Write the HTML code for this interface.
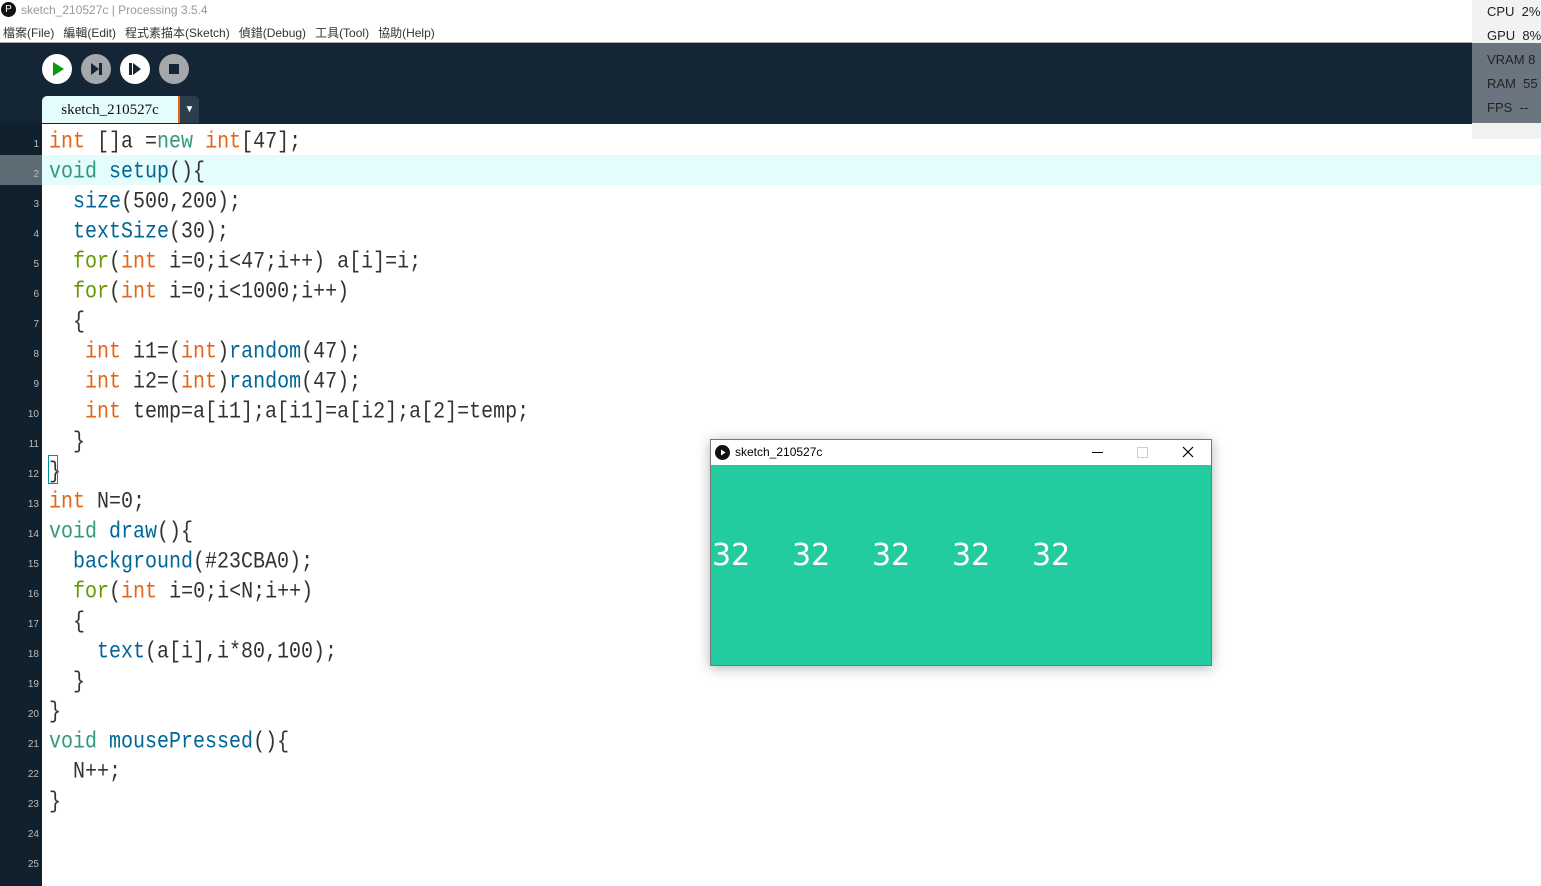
<!DOCTYPE html>
<html><head><meta charset="utf-8"><style>
body{margin:0;width:1541px;height:886px;overflow:hidden;background:#fff;position:relative;font-family:"Liberation Sans","Noto Sans CJK TC",sans-serif}
.abs{position:absolute}
#title{left:0;top:0;width:1541px;height:22px;font-size:12px;color:#999}
#menu{left:0;top:22px;height:19px;font-size:12px;color:#333;white-space:nowrap}
#menu span span{margin-right:9px}
#top{left:0;top:42px;width:1472px;height:81px;background:#142536;border-top:1px solid #aaa}
.btn{position:absolute;top:54px;width:30px;height:30px;border-radius:50%}
#gutter{left:0;top:123px;width:42px;height:763px;background:#11202d}
.ln{position:absolute;left:0;width:39px;text-align:right;font-size:10px;color:#bbb;font-family:"Liberation Sans",sans-serif}
.code{position:absolute;left:49px;font-family:"Liberation Mono",monospace;font-size:20px;color:#333;white-space:pre;height:30px;line-height:30px;transform:scaleY(1.15);transform-origin:left center}
.k{color:#E2661A}.g{color:#33997E}.b{color:#006699}.f{color:#669900}
</style></head><body>
<div class="abs" id="title"><span style="position:absolute;left:1px;top:2px;width:15px;height:15px;border-radius:50%;background:#111;color:#fff;font-size:10px;text-align:center;line-height:15px">P</span><span style="position:absolute;left:21px;top:3px">sketch_210527c | Processing 3.5.4</span></div>
<div class="abs" id="menu"><span style="position:absolute;left:3px;top:2px"><span>檔案(File)</span><span>編輯(Edit)</span><span>程式素描本(Sketch)</span><span>偵錯(Debug)</span><span>工具(Tool)</span><span>協助(Help)</span></span></div>
<div class="abs" id="top"></div>
<div class="btn" style="left:42px;background:#fff"><svg width="30" height="30"><path d="M11 8 L22 15 L11 22Z" fill="#0a9a0a"/></svg></div>
<div class="btn" style="left:81px;background:#a5a8ab"><svg width="30" height="30"><path d="M10 9 L18 15 L10 21Z" fill="#142536"/><rect x="18" y="9" width="3" height="12" fill="#142536"/></svg></div>
<div class="btn" style="left:120px;background:#fff"><svg width="30" height="30"><rect x="9" y="9" width="3" height="12" fill="#142536"/><path d="M13 9 L21 15 L13 21Z" fill="#142536"/></svg></div>
<div class="btn" style="left:159px;background:#a5a8ab"><svg width="30" height="30"><rect x="10" y="10" width="10" height="10" fill="#142536"/></svg></div>
<div class="abs" style="left:42px;top:96px;width:136px;height:27px;background:#e5fcfc;border-radius:5px 0 0 0;font-family:'Liberation Serif',serif;font-size:15px;color:#111;line-height:28px;text-align:center">sketch_210527c</div>
<div class="abs" style="left:178px;top:96px;width:2px;height:27px;background:#e2661a"></div>
<div class="abs" style="left:180px;top:96px;width:19px;height:27px;background:#2c3d4d;border-radius:0 5px 0 0;color:#fff;font-size:10px;text-align:center;line-height:27px">▼</div>
<div class="abs" style="left:1472px;top:0;width:69px;height:139px;background:#f2f2f2"></div>
<div class="abs" style="left:1472px;top:43px;width:69px;height:80px;background:#6b7580"></div>
<div class="abs" style="left:1487px;top:0px;font-size:13px;color:#222;line-height:24px;white-space:pre">CPU  2%
GPU  8%
VRAM 8
RAM  55
FPS  --</div>
<div class="abs" id="gutter"></div>
<div class="abs" style="left:0;top:155px;width:42px;height:30px;background:#5d6b75"></div>
<div class="abs" style="left:42px;top:155px;width:1499px;height:30px;background:#e5fcfc"></div>
<div id="lines"></div>
<script>
var L=[
'<span class=k>int</span> []a =<span class=g>new</span> <span class=k>int</span>[47];',
'<span class=g>void</span> <span class=b>setup</span>(){',
'  <span class=b>size</span>(500,200);',
'  <span class=b>textSize</span>(30);',
'  <span class=f>for</span>(<span class=k>int</span> i=0;i&lt;47;i++) a[i]=i;',
'  <span class=f>for</span>(<span class=k>int</span> i=0;i&lt;1000;i++)',
'  {',
'   <span class=k>int</span> i1=(<span class=k>int</span>)<span class=b>random</span>(47);',
'   <span class=k>int</span> i2=(<span class=k>int</span>)<span class=b>random</span>(47);',
'   <span class=k>int</span> temp=a[i1];a[i1]=a[i2];a[2]=temp;',
'  }',
'}',
'<span class=k>int</span> N=0;',
'<span class=g>void</span> <span class=b>draw</span>(){',
'  <span class=b>background</span>(#23CBA0);',
'  <span class=f>for</span>(<span class=k>int</span> i=0;i&lt;N;i++)',
'  {',
'    <span class=b>text</span>(a[i],i*80,100);',
'  }',
'}',
'<span class=g>void</span> <span class=b>mousePressed</span>(){',
'  N++;',
'}','',''];
var h='';for(var i=0;i<L.length;i++){var y=125+30*i;h+='<div class="ln" style="top:'+(y+14)+'px">'+(i+1)+'</div><div class="code" style="top:'+(y+3)+'px">'+L[i]+'</div>';}
document.getElementById('lines').innerHTML=h;
</script>
<div class="abs" style="left:48px;top:455px;width:10px;height:29px;border:1px solid #0090a0;box-sizing:border-box"></div>
<div class="abs" style="left:710px;top:439px;width:502px;height:227px;border:1px solid #777;box-sizing:border-box;background:#fff;box-shadow:0 2px 12px rgba(0,0,0,.3)">
<div style="position:absolute;left:4px;top:5px;width:15px;height:15px;border-radius:50%;background:#111"><svg width="15" height="15"><path d="M6 4.5 L10.5 7.5 L6 10.5Z" fill="#fff"/></svg></div>
<div style="position:absolute;left:24px;top:5px;font-size:12px;color:#000">sketch_210527c</div>
<div style="position:absolute;left:381px;top:12px;width:11px;height:1px;background:#000"></div>
<div style="position:absolute;left:426px;top:7px;width:9px;height:9px;border:1px solid #ccc"></div>
<svg style="position:absolute;left:471px;top:6px" width="12" height="12"><path d="M1 1L11 11M11 1L1 11" stroke="#000" stroke-width="1.2"/></svg>
<div style="position:absolute;left:0;top:25px;width:500px;height:200px;background:#23CBA0;color:#fff;font-family:'DejaVu Sans',sans-serif;font-size:30px">
<span style="position:absolute;left:1px;top:73px">32</span><span style="position:absolute;left:81px;top:73px">32</span><span style="position:absolute;left:161px;top:73px">32</span><span style="position:absolute;left:241px;top:73px">32</span><span style="position:absolute;left:321px;top:73px">32</span>
</div></div>
</body></html>
